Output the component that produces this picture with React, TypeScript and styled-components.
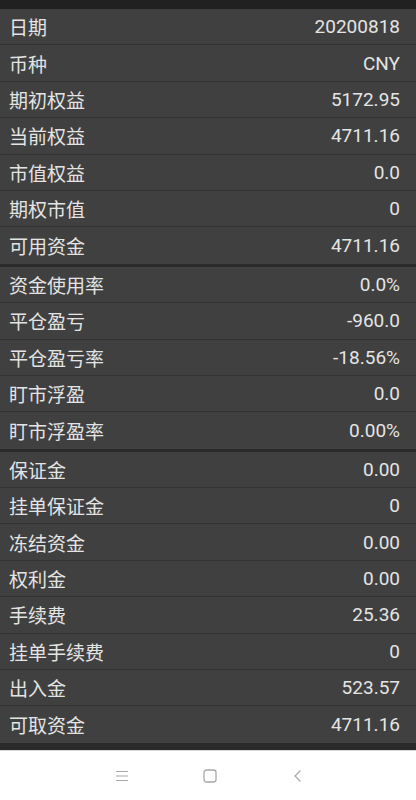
import React from "react";
import styled, { createGlobalStyle } from "styled-components";

const Global = createGlobalStyle`
  html, body { margin: 0; padding: 0; background: #ffffff; }
  body { font-family: Roboto, "Noto Sans CJK SC", sans-serif; }
`;

const Page = styled.div`
  width: 416px;
  height: 800px;
  display: flex;
  flex-direction: column;
  background: #2a2a2a;
  overflow: hidden;
`;

const TopBar = styled.div`
  height: 9px;
  background: #212121;
  flex: none;
`;

const Group = styled.div`
  display: flex;
  flex-direction: column;
  border-bottom: 3px solid #2b2b2b;
  &:last-of-type {
    border-bottom: none;
  }
`;

const Row = styled.div`
  box-sizing: border-box;
  height: 36.4px;
  display: flex;
  align-items: center;
  justify-content: space-between;
  padding: 0 16px 0 9px;
  background: #404040;
  border-bottom: 1px solid #343434;
  font-family: Roboto, "Noto Sans CJK SC", sans-serif;
  font-size: 19px;
  color: #e4e4e4;
  &:last-child {
    border-bottom: none;
  }
`;

const Label = styled.span`
  letter-spacing: 0;
`;

const Value = styled.span`
  font-family: Roboto, sans-serif;
`;

const Filler = styled.div`
  flex: 1;
  background: #2a2a2a;
  border-bottom: 1px solid #d9d9d9;
`;

const NavBar = styled.div`
  height: 49px;
  flex: none;
  background: #ffffff;
  display: flex;
  align-items: center;
  justify-content: center;
  gap: 74px;
  padding-left: 4px;
`;

const NavIcon = styled.svg`
  width: 14px;
  height: 14px;
  display: block;
`;

const groups: [string, string][][] = [
  [
    ["日期", "20200818"],
    ["币种", "CNY"],
    ["期初权益", "5172.95"],
    ["当前权益", "4711.16"],
    ["市值权益", "0.0"],
    ["期权市值", "0"],
    ["可用资金", "4711.16"],
  ],
  [
    ["资金使用率", "0.0%"],
    ["平仓盈亏", "-960.0"],
    ["平仓盈亏率", "-18.56%"],
    ["盯市浮盈", "0.0"],
    ["盯市浮盈率", "0.00%"],
  ],
  [
    ["保证金", "0.00"],
    ["挂单保证金", "0"],
    ["冻结资金", "0.00"],
    ["权利金", "0.00"],
    ["手续费", "25.36"],
    ["挂单手续费", "0"],
    ["出入金", "523.57"],
    ["可取资金", "4711.16"],
  ],
];

export default function App() {
  return (
    <>
      <Global />
      <Page>
        <TopBar />
        {groups.map((g, gi) => (
          <Group key={gi}>
            {g.map(([k, v]) => (
              <Row key={k}>
                <Label>{k}</Label>
                <Value>{v}</Value>
              </Row>
            ))}
          </Group>
        ))}
        <Filler />
        <NavBar>
          <NavIcon viewBox="0 0 14 14">
            <path d="M1 2.5h12M1 7h12M1 11.5h12" stroke="#a8a8a8" strokeWidth="1.2" fill="none" />
          </NavIcon>
          <NavIcon viewBox="0 0 14 14">
            <rect x="1" y="1" width="12" height="12" rx="2.5" stroke="#a8a8a8" strokeWidth="1.3" fill="none" />
          </NavIcon>
          <NavIcon viewBox="0 0 14 14">
            <path d="M9.5 1.5L4 7l5.5 5.5" stroke="#a8a8a8" strokeWidth="1.2" fill="none" />
          </NavIcon>
        </NavBar>
      </Page>
    </>
  );
}
